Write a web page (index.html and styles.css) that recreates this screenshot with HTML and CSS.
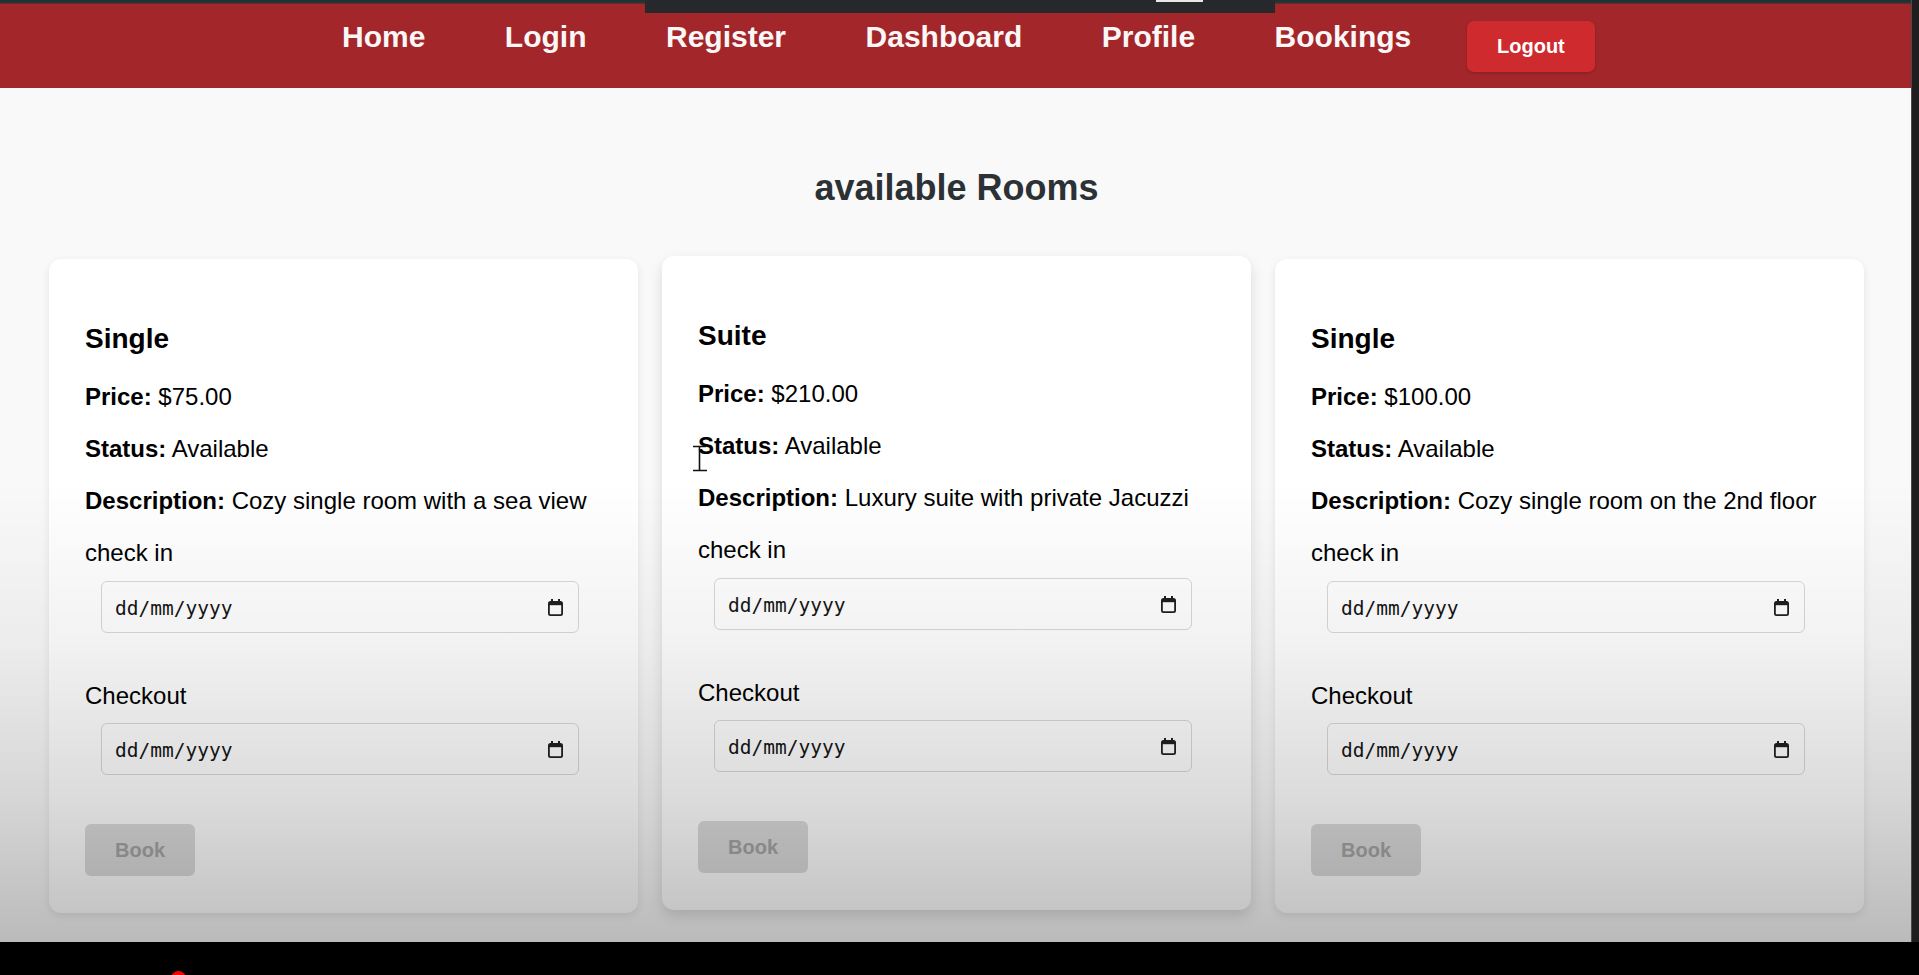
FILE: index.html
```html
<!DOCTYPE html>
<html lang="en">
<head>
<meta charset="utf-8">
<title>Available Rooms</title>
<link rel="stylesheet" href="styles.css">
</head>
<body>
<div class="frame">
  <div class="frame-row">
    <div class="screen">
      <div class="top-strip"></div>
      <div class="share-bar"><span class="share-bar-mark"></span></div>
      <header class="navbar">
        <a class="nav-link" href="#">Home</a>
        <a class="nav-link" href="#">Login</a>
        <a class="nav-link" href="#">Register</a>
        <a class="nav-link" href="#">Dashboard</a>
        <a class="nav-link" href="#">Profile</a>
        <a class="nav-link" href="#">Bookings</a>
        <button class="logout-btn" type="button">Logout</button>
      </header>
      <main class="content">
        <h2 class="page-title">available Rooms</h2>
        <div class="room-grid">
          <div class="room-card">
            <h3 class="room-name">Single</h3>
            <p class="room-line"><strong>Price:</strong> $75.00</p>
            <p class="room-line"><strong>Status:</strong> Available</p>
            <p class="room-line"><strong>Description:</strong> Cozy single room with a sea view</p>
            <label class="field-label">check in</label>
            <div class="date-field">
              <span class="date-text">dd/mm/yyyy</span>
              <svg class="cal-icon" width="15" height="17" viewBox="0 0 15 17"><rect x="3" y="0" width="2" height="3.5" fill="#202020"/><rect x="10" y="0" width="2" height="3.5" fill="#202020"/><rect x="0.9" y="2.9" width="13.2" height="13.2" rx="1.6" fill="none" stroke="#202020" stroke-width="1.8"/><rect x="1" y="3" width="13" height="3.2" fill="#202020"/></svg>
            </div>
            <label class="field-label field-label--gap">Checkout</label>
            <div class="date-field date-field--tight">
              <span class="date-text">dd/mm/yyyy</span>
              <svg class="cal-icon" width="15" height="17" viewBox="0 0 15 17"><rect x="3" y="0" width="2" height="3.5" fill="#202020"/><rect x="10" y="0" width="2" height="3.5" fill="#202020"/><rect x="0.9" y="2.9" width="13.2" height="13.2" rx="1.6" fill="none" stroke="#202020" stroke-width="1.8"/><rect x="1" y="3" width="13" height="3.2" fill="#202020"/></svg>
            </div>
            <button class="book-btn" type="button" disabled>Book</button>
          </div>

          <div class="room-card room-card--hover">
            <h3 class="room-name">Suite</h3>
            <p class="room-line"><strong>Price:</strong> $210.00</p>
            <p class="room-line"><strong>Status:</strong> Available</p>
            <p class="room-line"><strong>Description:</strong> Luxury suite with private Jacuzzi</p>
            <label class="field-label">check in</label>
            <div class="date-field">
              <span class="date-text">dd/mm/yyyy</span>
              <svg class="cal-icon" width="15" height="17" viewBox="0 0 15 17"><rect x="3" y="0" width="2" height="3.5" fill="#202020"/><rect x="10" y="0" width="2" height="3.5" fill="#202020"/><rect x="0.9" y="2.9" width="13.2" height="13.2" rx="1.6" fill="none" stroke="#202020" stroke-width="1.8"/><rect x="1" y="3" width="13" height="3.2" fill="#202020"/></svg>
            </div>
            <label class="field-label field-label--gap">Checkout</label>
            <div class="date-field date-field--tight">
              <span class="date-text">dd/mm/yyyy</span>
              <svg class="cal-icon" width="15" height="17" viewBox="0 0 15 17"><rect x="3" y="0" width="2" height="3.5" fill="#202020"/><rect x="10" y="0" width="2" height="3.5" fill="#202020"/><rect x="0.9" y="2.9" width="13.2" height="13.2" rx="1.6" fill="none" stroke="#202020" stroke-width="1.8"/><rect x="1" y="3" width="13" height="3.2" fill="#202020"/></svg>
            </div>
            <button class="book-btn" type="button" disabled>Book</button>
            <svg class="text-cursor" width="18" height="30" viewBox="0 0 18 30"><path d="M2 3.5h6.5M8.5 3.5h6.5M8.5 3.5v24M2 27.5h14" fill="none" stroke="#111" stroke-width="1.6"/></svg>
          </div>

          <div class="room-card">
            <h3 class="room-name">Single</h3>
            <p class="room-line"><strong>Price:</strong> $100.00</p>
            <p class="room-line"><strong>Status:</strong> Available</p>
            <p class="room-line"><strong>Description:</strong> Cozy single room on the 2nd floor</p>
            <label class="field-label">check in</label>
            <div class="date-field">
              <span class="date-text">dd/mm/yyyy</span>
              <svg class="cal-icon" width="15" height="17" viewBox="0 0 15 17"><rect x="3" y="0" width="2" height="3.5" fill="#202020"/><rect x="10" y="0" width="2" height="3.5" fill="#202020"/><rect x="0.9" y="2.9" width="13.2" height="13.2" rx="1.6" fill="none" stroke="#202020" stroke-width="1.8"/><rect x="1" y="3" width="13" height="3.2" fill="#202020"/></svg>
            </div>
            <label class="field-label field-label--gap">Checkout</label>
            <div class="date-field date-field--tight">
              <span class="date-text">dd/mm/yyyy</span>
              <svg class="cal-icon" width="15" height="17" viewBox="0 0 15 17"><rect x="3" y="0" width="2" height="3.5" fill="#202020"/><rect x="10" y="0" width="2" height="3.5" fill="#202020"/><rect x="0.9" y="2.9" width="13.2" height="13.2" rx="1.6" fill="none" stroke="#202020" stroke-width="1.8"/><rect x="1" y="3" width="13" height="3.2" fill="#202020"/></svg>
            </div>
            <button class="book-btn" type="button" disabled>Book</button>
          </div>
        </div>
      </main>
      <div class="video-shade"></div>
    </div>
    <div class="frame-edge"></div>
  </div>
  <div class="player-bar"><span class="scrub-dot"></span></div>
</div>
</body>
</html>
```

FILE: styles.css
```css
* {
  box-sizing: border-box;
}

html, body {
  margin: 0;
  padding: 0;
  background: #000;
}

body {
  font-family: "Liberation Sans", Arial, sans-serif;
  color: #000;
}

.frame {
  width: 1919px;
  height: 975px;
  display: flex;
  flex-direction: column;
  overflow: hidden;
}

.frame-row {
  display: flex;
  height: 942px;
}

.screen {
  position: relative;
  flex: 1;
  background: #f9f9f9;
  overflow: hidden;
}

.frame-edge {
  width: 8px;
  background: #1e1e1e;
  border-left: 1px solid #4a4a4a;
}

.top-strip {
  height: 4px;
  background: linear-gradient(to bottom, #1d3232 0, #1f3434 2px, #6e2b2d 4px);
}

.share-bar {
  position: absolute;
  left: 645px;
  top: 0;
  width: 630px;
  height: 13px;
  background: #26282c;
  z-index: 3;
}

.share-bar-mark {
  position: absolute;
  left: 511px;
  top: 0;
  width: 47px;
  height: 2px;
  background: #e8e8e8;
}

.navbar {
  height: 84px;
  background: #a2262a;
  display: flex;
  align-items: center;
  justify-content: center;
}

.nav-link {
  color: #fbf7f7;
  text-decoration: none;
  font-size: 30px;
  font-weight: bold;
  margin: 0 39.75px;
  padding-bottom: 19px;
}

.logout-btn {
  margin: 0 14px 0 16px;
  padding: 14px 30px;
  font-family: "Liberation Sans", Arial, sans-serif;
  font-size: 20px;
  font-weight: bold;
  line-height: 23px;
  color: #fff;
  background: #cf2a2e;
  border: none;
  border-radius: 7px;
  box-shadow: 0 1px 3px rgba(0, 0, 0, 0.18);
}

.content {
  padding: 79px 47px 0 49px;
}

.page-title {
  margin: 0 0 50px;
  text-align: center;
  font-size: 36px;
  font-weight: bold;
  color: #2c3135;
}

.room-grid {
  display: grid;
  grid-template-columns: repeat(3, 1fr);
  gap: 24px;
  align-items: start;
}

.room-card {
  position: relative;
  background: #fff;
  border-radius: 12px;
  padding: 36px 36px 37px;
  box-shadow: 0 3px 9px rgba(0, 0, 0, 0.09);
}

.room-card--hover {
  transform: translateY(-3px);
  box-shadow: 0 6px 14px rgba(0, 0, 0, 0.13);
}

.room-name {
  margin: 28px 0;
  font-size: 28px;
  font-weight: bold;
}

.room-line {
  margin: 24px 0 0;
  font-size: 24px;
}

.room-name + .room-line {
  margin-top: 0;
}

.field-label {
  display: block;
  margin-top: 24px;
  font-size: 24px;
}

.field-label--gap {
  margin-top: 49px;
}

.date-field {
  display: flex;
  align-items: center;
  justify-content: space-between;
  width: calc(100% - 39px);
  height: 52px;
  margin: 14px 0 0 16px;
  padding: 3px 15px 0 13px;
  background: #fff;
  border: 1.5px solid #d9d9d9;
  border-radius: 6px;
}

.date-field--tight {
  margin-top: 13px;
}

.date-text {
  font-family: "DejaVu Sans Mono", "Liberation Mono", monospace;
  font-size: 19.5px;
  color: #151515;
}

.cal-icon {
  display: block;
  margin-top: -3px;
}

.book-btn {
  display: block;
  margin-top: 49px;
  height: 52px;
  padding: 0 30px;
  font-family: "Liberation Sans", Arial, sans-serif;
  font-size: 20px;
  font-weight: bold;
  color: #a6a6a6;
  background: #dcdcdc;
  border: none;
  border-radius: 6px;
}

.text-cursor {
  position: absolute;
  left: 29px;
  top: 187px;
}

.video-shade {
  position: absolute;
  left: 0;
  right: 0;
  top: 480px;
  bottom: 0;
  pointer-events: none;
  z-index: 2;
  background: linear-gradient(to bottom, rgba(0, 0, 0, 0) 0%, rgba(0, 0, 0, 0.05) 35%, rgba(0, 0, 0, 0.14) 69%, rgba(0, 0, 0, 0.25) 100%);
}

.player-bar {
  position: relative;
  height: 33px;
  background: #000;
  overflow: hidden;
}

.scrub-dot {
  position: absolute;
  left: 171px;
  top: 29px;
  width: 15px;
  height: 15px;
  border-radius: 50%;
  background: #f00;
}
```
